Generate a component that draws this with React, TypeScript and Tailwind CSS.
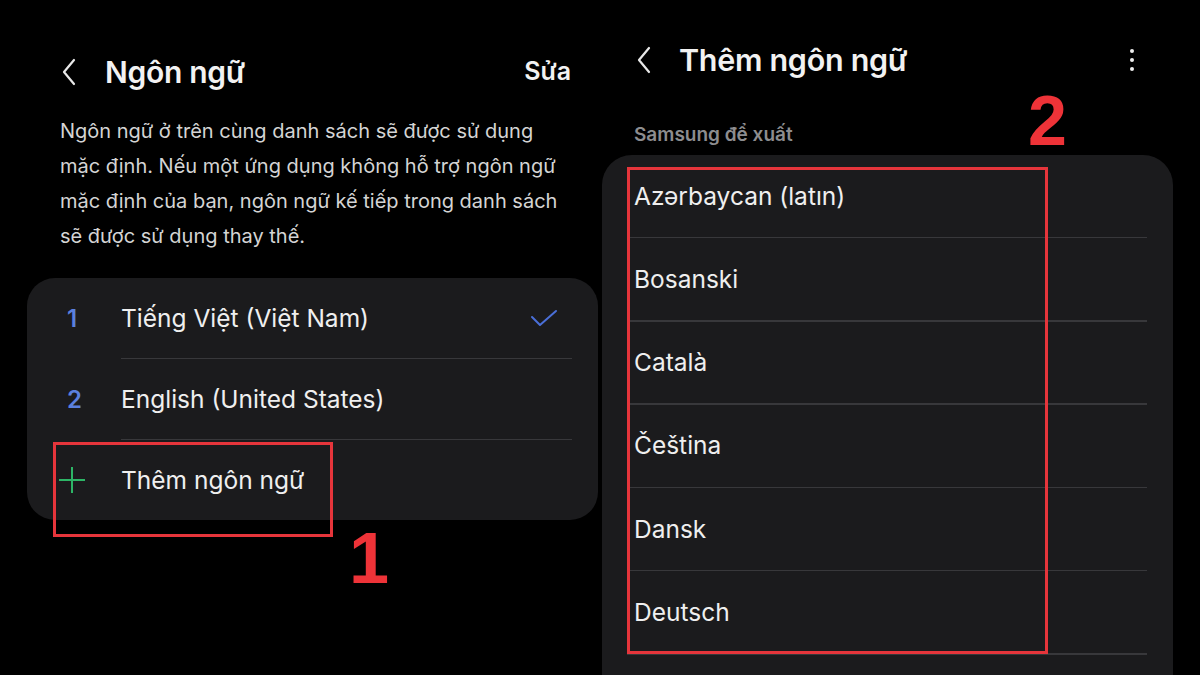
import React from "react";

const Chevron = () => (
  <svg width="16" height="28" viewBox="0 0 16 28" fill="none">
    <path d="M13 2 L3 14 L13 26" stroke="#e8e8e8" strokeWidth="2.2" strokeLinecap="round" strokeLinejoin="round" />
  </svg>
);

const leftRows = [
  { n: "1", label: "Tiếng Việt (Việt Nam)", check: true },
  { n: "2", label: "English (United States)", check: false },
];

const rightRows = ["Azərbaycan (latın)", "Bosanski", "Català", "Čeština", "Dansk", "Deutsch"];

export default function App() {
  return (
    <div
      className="relative w-[1200px] h-[675px] overflow-hidden bg-black text-[#f2f2f2] flex"
      style={{ fontFamily: "Inter, Roboto, 'Noto Sans', sans-serif" }}
    >
      {/* Left panel */}
      <div className="w-[600px] flex flex-col">
        <div className="mt-[52px] h-[40px] flex items-center pl-[61px] pr-[29px]">
          <Chevron />
          <span className="ml-[28px] text-[30px] font-semibold tracking-[-0.3px]">Ngôn ngữ</span>
          <span className="ml-auto text-[25px] font-semibold">Sửa</span>
        </div>
        <p className="mt-[22px] pl-[60px] pr-[38px] text-[20px] leading-[35px] text-[#d4d4d4]">
          Ngôn ngữ ở trên cùng danh sách sẽ được sử dụng mặc định. Nếu một ứng dụng không hỗ trợ ngôn ngữ mặc định của bạn, ngôn ngữ kế tiếp trong danh sách sẽ được sử dụng thay thế.
        </p>
        <div className="mt-[24px] ml-[27px] w-[571px] rounded-[28px] bg-[#1b1b1d] flex flex-col">
          {leftRows.map((r) => (
            <div key={r.n} className="h-[81px] flex flex-col">
              <div className="flex-1 flex items-center pt-[2px]">
                <span className="w-[94px] pl-[40px] text-[24px] font-semibold text-[#5b80de]">{r.n}</span>
                <span className="text-[24.5px] text-[#efefef]">{r.label}</span>
                {r.check && (
                  <svg className="ml-auto mr-[40px]" width="28" height="20" viewBox="0 0 28 20" fill="none">
                    <path d="M2 8 L10 16 L26 2" stroke="#4a6fd8" strokeWidth="2" strokeLinecap="round" strokeLinejoin="round" />
                  </svg>
                )}
              </div>
              <div className="ml-[94px] mr-[26px] h-[1.5px] bg-[#38383b]" />
            </div>
          ))}
          <div className="h-[80px] flex items-center">
            <span className="w-[94px] pl-[31px] flex items-center">
              <svg width="28" height="28" viewBox="0 0 28 28" fill="none">
                <path d="M14 1 V27 M1 14 H27" stroke="#2db566" strokeWidth="2" />
              </svg>
            </span>
            <span className="text-[24.5px] text-[#efefef]">Thêm ngôn ngữ</span>
          </div>
        </div>
      </div>

      {/* Right panel */}
      <div className="w-[600px] flex flex-col">
        <div className="mt-[40px] h-[40px] flex items-center pl-[36px] pr-[66px]">
          <Chevron />
          <span className="ml-[27px] text-[30.5px] font-semibold tracking-[-0.3px]">Thêm ngôn ngữ</span>
          <span className="ml-auto flex flex-col gap-[5px]">
            <span className="w-[4px] h-[4px] rounded-full bg-[#eeeeee]" />
            <span className="w-[4px] h-[4px] rounded-full bg-[#eeeeee]" />
            <span className="w-[4px] h-[4px] rounded-full bg-[#eeeeee]" />
          </span>
        </div>
        <div className="mt-[43px] pl-[34px] text-[19px] font-semibold leading-[24px] text-[#8d8d8f]">Samsung để xuất</div>
        <div className="mt-[8px] ml-[2px] w-[571px] rounded-t-[30px] bg-[#1b1b1d] flex-1 flex flex-col">
          {rightRows.map((r) => (
            <div key={r} className="h-[83.3px] shrink-0 flex flex-col">
              <div className="flex-1 flex items-center pl-[32px] text-[24.5px] text-[#efefef]">{r}</div>
              <div className="ml-[25px] mr-[26px] h-[1.5px] bg-[#38383b]" />
            </div>
          ))}
        </div>
      </div>

      {/* Annotations */}
      <div className="absolute left-[53px] top-[442px] w-[280px] h-[95px] border-[3px] border-[#e6353b]" />
      <div
        className="absolute left-[349px] top-[522px] text-[72px] font-black leading-none text-[#ee3338]"
        style={{ fontFamily: "'Liberation Sans', Arial, sans-serif" }}
      >
        1
      </div>
      <div className="absolute left-[627px] top-[167px] w-[421px] h-[487px] border-[3px] border-[#e6353b]" />
      <div
        className="absolute left-[1028px] top-[86px] text-[70px] font-black leading-none text-[#ee3338]"
        style={{ fontFamily: "'Liberation Sans', Arial, sans-serif" }}
      >
        2
      </div>
    </div>
  );
}
